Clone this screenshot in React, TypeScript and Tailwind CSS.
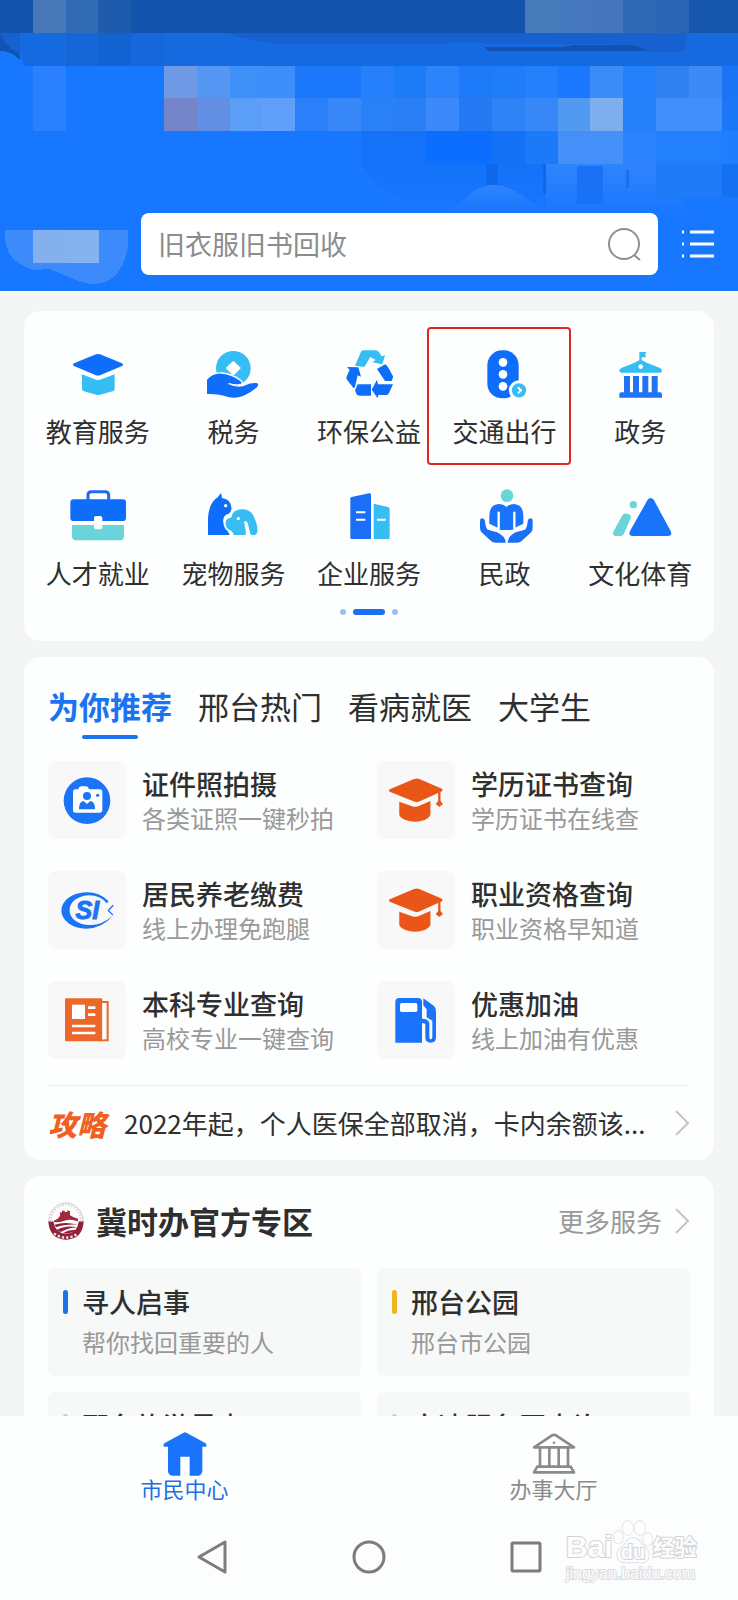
import React from "react"

const BLUE = "#0f6dfb"
const CYAN = "#36bdf3"
const TEAL = "#69d5da"

// [column, row, colour] of the tiles in the header artwork
const MOSAIC: [number, number, string][] = [
    [1, 0, "#4878b8"], [2, 0, "#316bb3"], [3, 0, "#1e5bad"],
    [16, 0, "#487bba"], [17, 0, "#4678bd"], [18, 0, "#4677bd"], [19, 0, "#2f68b4"], [20, 0, "#2c65b4"], [21, 0, "#1657ad"], [22, 0, "#1657ad"],
    [2, 1, "#1766d8"], [3, 1, "#1262d2"], [4, 1, "#1567db"],
    [1, 2, "#2a80ff"], [5, 2, "#6f99e5"], [6, 2, "#5596f3"], [7, 2, "#3f8ff8"], [8, 2, "#3d8dfa"], [9, 2, "#1c78fb"], [10, 2, "#1c78fb"],
    [11, 2, "#2680fb"], [12, 2, "#1c7bf6"], [13, 2, "#2c84fd"], [14, 2, "#1d7bf9"], [15, 2, "#207df9"], [16, 2, "#2580fc"],
    [17, 2, "#1a78fe"], [18, 2, "#3c8cf8"], [19, 2, "#2580fb"], [20, 2, "#2f80ee"], [21, 2, "#3b8af7"], [22, 2, "#1a74f5"],
    [1, 3, "#2a80ff"], [5, 3, "#7385c8"], [6, 3, "#628ee4"], [7, 3, "#5a9ef7"], [8, 3, "#609ffa"], [9, 3, "#2b80fa"], [10, 3, "#3888fa"],
    [11, 3, "#2a80f7"], [12, 3, "#2b7ff5"], [13, 3, "#3b89fa"], [14, 3, "#257af4"], [15, 3, "#2d82f6"], [16, 3, "#3787f8"],
    [17, 3, "#5299f1"], [18, 3, "#7eaeee"], [19, 3, "#2680fa"], [20, 3, "#3f8efa"], [21, 3, "#3f8efa"], [22, 3, "#1c76f8"],
    [11, 4, "#1472f9"], [12, 4, "#1472f9"], [13, 4, "#0c6eff"], [14, 4, "#0c6eff"], [15, 4, "#1371f5"], [16, 4, "#1c79f8"],
    [17, 4, "#4590f8"], [18, 4, "#4590f8"], [19, 4, "#2c82fb"], [20, 4, "#2380fd"], [21, 4, "#2380fd"], [22, 4, "#1f7efd"],
    [20, 5, "#1f7bf8"], [21, 5, "#1f7bf8"], [22, 5, "#1472f2"],
    [1, 7, "#84b1ee"], [2, 7, "#84b3f0"],
]

const HeaderArt = () => (
    <svg className="absolute inset-0 h-full w-full" viewBox="0 0 738 291" preserveAspectRatio="none" shapeRendering="crispEdges" aria-hidden="true">
        <defs>
            <linearGradient id="skyline" x1="0" y1="0" x2="0" y2="1">
                <stop offset="0" stopColor="#2f84fb" />
                <stop offset="1" stopColor="#1877ff" />
            </linearGradient>
            <linearGradient id="haze" x1="0" y1="0" x2="0" y2="1">
                <stop offset="0" stopColor="#1272f8" />
                <stop offset="1" stopColor="#1877ff" />
            </linearGradient>
        </defs>
        <rect width="738" height="291" fill="#1877ff" />
        <rect width="738" height="33" fill="#1153ad" />
        <path d="M18 33H738V66H24Q20 50 18 50Z" fill="#156ae0" />
        <path d="M0 33H20V60Q12 51 0 51Z" fill="#1153b4" />
        <path d="M20 33V54Q6 48 0 33Z" fill="#1562cc" />
        <path d="M228 33H686V50Q660 56 640 48L610 44H490Q470 40 440 44H280Q250 42 228 33Z" fill="#1660d0" />
        <path d="M484 47H560L574 45H632L650 51H488Z" fill="#1153b4" />
        <path d="M362 164H660V212H440Q380 200 362 164Z" fill="url(#haze)" />
        <path d="M546 164H660V180L694 214H546Z" fill="url(#skyline)" />
        <path d="M460 204Q486 172 520 194L546 212H440Z" fill="url(#skyline)" />
        <rect x="486" y="161" width="12" height="24" fill="#1068ec" />
        <rect x="543" y="164" width="3" height="30" fill="#1266e8" />
        <rect x="577" y="166" width="26" height="38" fill="#1971f6" />
        <rect x="626" y="170" width="3" height="18" fill="#1a6fee" />
        <path d="M5 230H128V246Q122 284 92 284Q84 284 50 269L34 270Q5 262 5 236Z" fill="#3d8afa" />
        {MOSAIC.map(([col, row, fill]) => (
            <rect
                key={`${col}-${row}`}
                x={col * 32.8}
                y={row === 7 ? 230 : row * 32.8}
                width="33"
                height="33"
                fill={fill}
            />
        ))}
    </svg>
)

const ServiceSvg = ({ children }: { children: React.ReactNode }) => (
    <svg className="h-15 w-15 overflow-visible" viewBox="0 0 180 180" aria-hidden="true">
        {children}
    </svg>
)

const SERVICES = [
    {
        name: "教育服务",
        art: (
            <>
                <path d="M84 28Q90 26 96 28L162 55Q168 59 162 63L98 90Q90 93 82 90L18 63Q12 59 18 55Z" fill={BLUE} />
                <path d="M42 88L84 104Q90 106 96 104L140 88V131Q140 137 134 139L96 149Q90 151 84 149L48 139Q42 137 42 131Z" fill={CYAN} />
            </>
        ),
    },
    {
        name: "税务",
        art: (
            <>
                <circle cx="91" cy="70" r="52" fill={CYAN} />
                <path d="M91 50L111 69L91 89L71 69Z" fill="#fff" stroke="#fff" strokeWidth="4" strokeLinejoin="round" />
                <path
                    d="M12 104Q30 84 56 86Q86 88 112 108Q120 116 110 120Q92 122 78 118Q98 128 120 124Q142 112 160 114Q169 116 163 125Q146 142 120 153Q96 162 75 156Q48 146 12 147Z"
                    fill={BLUE}
                    stroke="#fff"
                    strokeWidth="8"
                    paintOrder="stroke"
                />
                <path d="M78 116Q96 122 112 118" fill="none" stroke="#fff" strokeWidth="4" strokeLinecap="round" />
            </>
        ),
    },
    {
        name: "环保公益",
        art: (
            <>
                <path d="M48 62L66 20Q68 16 74 16H110Q116 16 120 21L128 34L138 31L130 58L100 52L110 45L94 36L76 66Z" fill={CYAN} />
                <path d="M24 66L58 67L66 95L56 91L48 126L44 130L24 104Q20 98 24 92L32 74Z" fill={BLUE} />
                <path d="M56 118H96V152H62Q54 152 52 146L48 136Z" fill={BLUE} />
                <path d="M98 134L114 104L117 118H162L150 144Q148 150 142 150H118L116 160Z" fill={BLUE} />
                <path d="M114 72L138 58Q144 60 148 68L162 94Q163 100 158 108H138Z" fill={BLUE} />
            </>
        ),
    },
    {
        name: "交通出行",
        marked: true,
        art: (
            <>
                <rect x="37" y="16" width="94" height="144" rx="44" fill={BLUE} />
                <circle cx="84" cy="52" r="13" fill="#fff" />
                <circle cx="84" cy="88" r="13" fill="#fff" />
                <circle cx="84" cy="124" r="13" fill="#fff" />
                <circle cx="132" cy="136" r="26" fill={CYAN} stroke="#fff" strokeWidth="9" />
                <path d="M129 127L138 136L129 145" fill="none" stroke="#fff" strokeWidth="6" />
            </>
        ),
    },
    {
        name: "政务",
        art: (
            <>
                <path d="M88 21H109L105 29L109 37H95V46Q102 48 110 53L150 69Q156 72 156 77Q156 83 150 83H34Q28 83 28 77Q28 72 34 69L74 53Q82 48 88 46Z" fill={CYAN} />
                <circle cx="92" cy="65" r="7" fill="#fff" />
                <path d="M42 93H60V142H69V93H87V142H97V93H115V142H125V93H143V142H150Q156 142 156 148V158H28V148Q28 142 34 142H42Z" fill="#2272f4" />
            </>
        ),
    },
    {
        name: "人才就业",
        art: (
            <>
                <path d="M60 38V24Q60 14 70 14H112Q122 14 122 24V38" fill="none" stroke="#1d6df0" strokeWidth="9" />
                <rect x="7" y="37" width="167" height="65" rx="10" fill={BLUE} />
                <path d="M12 114H168V148Q168 160 156 160H24Q12 160 12 148Z" fill={TEAL} />
                <rect x="78" y="87" width="25" height="40" rx="6" fill="#fff" />
            </>
        ),
    },
    {
        name: "宠物服务",
        art: (
            <>
                <path d="M15 144V94Q18 46 44 31L54 18L57 33Q74 36 80 46Q92 68 78 80Q58 84 61 106Q62 124 74 132L80 144Z" fill={BLUE} />
                <circle cx="68" cy="56" r="5" fill="#fff" />
                <path d="M68 104Q70 94 84 92Q90 68 114 67Q140 66 150 84Q166 116 163 136Q160 146 148 144Q138 142 136 132L130 106Q124 104 125 116Q130 134 128 144H92Q90 132 78 128Q66 122 68 104Z" fill={CYAN} />
                <circle cx="106" cy="95" r="5" fill="#fff" />
                <path d="M124 108Q130 102 132 112L140 144" fill="none" stroke="#fff" strokeWidth="6" />
            </>
        ),
    },
    {
        name: "企业服务",
        art: (
            <>
                <path d="M34 34Q34 31 38 30L90 19Q96 18 96 23V156H38Q34 156 34 152Z" fill="#1b6ff6" />
                <path d="M104 50L147 60Q152 61 152 66V152Q152 156 148 156H104Z" fill={CYAN} />
                <path d="M51 76H79M51 98H79M114 98H140" stroke="#fff" strokeWidth="6" />
            </>
        ),
    },
    {
        name: "民政",
        art: (
            <>
                <circle cx="96" cy="26" r="19" fill={TEAL} />
                <path d="M43 110V86Q43 54 70 51Q86 51 94 60Q102 51 118 51Q145 54 145 86V110L120 122Q116 129 108 129H80Q72 129 68 122Z" fill="#1a74fb" />
                <path d="M71 74V126M118 74V126" stroke="#fff" strokeWidth="7" />
                <path d="M20 94Q29 94 30 104Q32 122 38 128L66 136Q92 148 92 167H62Q50 166 44 158L22 138Q15 132 15 124V102Q15 94 20 94Z" fill="#1a6ff5" />
                <path d="M168 94Q159 94 158 104Q156 122 150 128L122 136Q98 148 98 167H126Q138 166 144 158L166 138Q173 132 173 124V102Q173 94 168 94Z" fill="#1a6ff5" />
            </>
        ),
    },
    {
        name: "文化体育",
        art: (
            <>
                <path d="M112 40Q122 26 132 40L182 132Q188 147 174 147H68Q54 147 60 132Z" fill="#1874fb" />
                <circle cx="70" cy="53" r="11" fill={TEAL} />
                <path d="M36 86Q42 77 52 80Q66 84 62 94L44 136Q40 147 32 147H18Q6 146 10 134Z" fill={TEAL} />
            </>
        ),
    },
]

const OrangeCap = () => (
    <svg className="h-11 w-14" viewBox="0 0 168 134" aria-hidden="true">
        <path d="M78 3Q86 0 94 3L163 33Q168 36 163 40L96 71Q86 76 76 71L4 42Q-1 38 4 34Z" fill="#ea5518" />
        <path d="M33 72L72 86Q84 90 96 84L128 70V112Q126 120 112 127Q82 140 50 127Q34 120 33 112Z" fill="#ea5518" />
        <path d="M155 38V72" stroke="#ea5518" strokeWidth="7" />
        <path d="M155 66L166 79L155 88L144 79Z" fill="#ea5518" />
    </svg>
)

const CameraIcon = () => (
    <svg className="h-12 w-12" viewBox="0 0 144 144" aria-hidden="true">
        <circle cx="72" cy="74" r="70" fill="#1a74f5" />
        <path d="M38 40H46Q48 31 56 31H68Q76 31 78 40H110Q118 40 118 48V102Q118 110 110 110H38Q30 110 30 102V48Q30 40 38 40Z" fill="#fff" />
        <circle cx="72" cy="60" r="12" fill="#1a74f5" />
        <path d="M48 100Q48 76 62 75L72 84L82 75Q96 76 96 100Z" fill="#1a74f5" />
        <circle cx="104" cy="58" r="5" fill="#1a74f5" />
    </svg>
)

const SocialInsuranceIcon = () => (
    <svg className="h-[37px] w-[53px]" viewBox="0 0 160 112" aria-hidden="true">
        <path d="M144 28Q116 0 76 1A76 54 0 0 0 1 56A76 54 0 0 0 76 111Q126 110 156 72Q122 102 86 100A60 43 0 0 1 26 56A60 43 0 0 1 86 10Q118 10 138 34Z" fill="#1a74f5" />
        <path d="M158 40L143 56L157 70" fill="none" stroke="#1a74f5" strokeWidth="4" />
        <text x="44" y="82" className="font-['Liberation_Sans'] text-[76px] font-bold italic" fill="#1a74f5" stroke="#1a74f5" strokeWidth="3">SI</text>
    </svg>
)

const NewspaperIcon = () => (
    <svg className="h-11 w-11" viewBox="0 0 132 132" aria-hidden="true">
        <rect x="0" y="1" width="112" height="129" rx="4" fill="#ec672a" />
        <path d="M108 12H128V127H104" fill="none" stroke="#ec672a" strokeWidth="6" />
        <path d="M115 15V124" stroke="#fff" strokeWidth="6" />
        <rect x="21" y="20" width="39" height="43" fill="#fff" />
        <path d="M69 29H91M69 50H91M21 84H91M21 105H91" stroke="#fff" strokeWidth="8" />
    </svg>
)

const FuelIcon = () => (
    <svg className="h-[45px] w-[42px]" viewBox="0 0 124 135" aria-hidden="true">
        <path d="M0 134V12Q0 0 12 0H68Q80 0 80 12V134Z" fill="#1a74fb" />
        <rect x="14" y="15" width="52" height="27" rx="5" fill="#fff" />
        <path d="M84 1L116 24Q122 29 122 40V120Q121 134 106 134Q90 134 90 118V80Q90 75 80 75V62Q101 62 102 76V116Q102 124 106 124Q111 124 111 116V68L94 58V34L84 22Z" fill="#1a74fb" />
    </svg>
)

const TABS = ["为你推荐", "邢台热门", "看病就医", "大学生"]

const RECOMMENDED = [
    { title: "证件照拍摄", sub: "各类证照一键秒拍", icon: <CameraIcon /> },
    { title: "学历证书查询", sub: "学历证书在线查", icon: <OrangeCap /> },
    { title: "居民养老缴费", sub: "线上办理免跑腿", icon: <SocialInsuranceIcon /> },
    { title: "职业资格查询", sub: "职业资格早知道", icon: <OrangeCap /> },
    { title: "本科专业查询", sub: "高校专业一键查询", icon: <NewspaperIcon /> },
    { title: "优惠加油", sub: "线上加油有优惠", icon: <FuelIcon /> },
]

const OFFICIAL = [
    { title: "寻人启事", sub: "帮你找回重要的人", bar: "bg-[#1a73ea]" },
    { title: "邢台公园", sub: "邢台市公园", bar: "bg-[#efb51c]" },
    { title: "邢台旅游景点", bar: "bg-[#c9cccf]" },
    { title: "高速服务区查询", bar: "bg-[#c9cccf]" },
]

const Chevron = () => (
    <svg className="h-7 w-4 shrink-0" viewBox="0 0 16 28" fill="none" stroke="#c4c4c4" strokeWidth="2" aria-hidden="true">
        <path d="M2 2L14 14L2 26" />
    </svg>
)

const Emblem = () => (
    <svg className="h-[38px] w-9 shrink-0" viewBox="0 0 108 114" aria-hidden="true">
        <ellipse cx="54" cy="57" rx="51" ry="54" fill="#fff" stroke="#b9a3a8" strokeWidth="2" />
        <ellipse cx="54" cy="57" rx="45" ry="48" fill="none" stroke="#d3c0c4" strokeWidth="5" strokeDasharray="4 5" />
        <path d="M1 58Q8 60 16 58Q22 94 54 96Q88 94 92 58Q100 60 107 58Q104 112 54 113Q4 112 1 58Z" fill="#94213a" />
        <path d="M18 94Q54 120 90 94" fill="none" stroke="#f3e4e7" strokeWidth="7" strokeDasharray="7 6" />
        <path d="M18 56Q30 52 36 42L36 30L42 32V26H50V30H58V25L66 28V40Q78 48 90 50V58Q64 48 44 58Q30 62 18 60Z" fill="#a3283c" />
        <path d="M20 68Q50 58 90 68Q52 66 24 76ZM26 84Q52 68 88 76Q60 78 38 90ZM44 94Q62 82 84 84Q76 92 58 95Z" fill="#94213a" />
    </svg>
)

const HomeIcon = () => (
    <svg className="h-11 w-11" viewBox="0 0 132 132" aria-hidden="true">
        <path d="M62 2Q66 0 70 2L128 34Q131 37 130 44H118V118Q116 130 106 131H80V74H52V131H28Q16 130 15 118V44H2Q0 37 4 34Z" fill="#1a74fb" />
    </svg>
)

const HallIcon = () => (
    <svg className="h-11 w-11" viewBox="0 0 132 132" fill="none" stroke="#8b8b8b" strokeWidth="8" strokeLinejoin="round" aria-hidden="true">
        <path d="M6 46L60 10Q66 7 72 10L126 46ZM24 48V104M52 48V104M80 48V104M108 48V104M16 104H116L126 121H6Z" />
        <circle cx="66" cy="32" r="3" fill="#8b8b8b" strokeWidth="2" />
    </svg>
)

const Watermark = () => (
    <div className="pointer-events-none absolute top-0 right-9 flex w-[136px] flex-col font-['Liberation_Sans','Noto_Sans_CJK_SC',sans-serif] font-bold text-[#fdfdfe] [paint-order:stroke_fill]">
        <div className="flex items-end [-webkit-text-stroke:2px_#d4d4d6]">
            <span className="text-[30px] leading-[34px]">Bai</span>
            <span className="relative h-11 w-10 shrink-0">
                <svg className="absolute inset-0 h-full w-full" viewBox="0 0 120 132" fill="#fdfdfe" stroke="#d8d8da" strokeWidth="4" aria-hidden="true">
                    <ellipse cx="16" cy="52" rx="14" ry="19" />
                    <ellipse cx="44" cy="24" rx="16" ry="21" />
                    <ellipse cx="80" cy="24" rx="16" ry="21" />
                    <ellipse cx="104" cy="58" rx="14" ry="19" />
                    <path d="M60 54Q76 54 86 72Q108 88 108 106Q106 128 84 128Q60 124 40 128Q14 128 12 106Q12 90 34 74Q44 54 60 54Z" />
                </svg>
                <span className="absolute bottom-0 left-2 text-xl leading-6">du</span>
            </span>
            <span className="text-[22px] leading-8">经验</span>
        </div>
        <span className="text-base leading-5 font-normal [-webkit-text-stroke:2px_#dcdcde]">jingyan.baidu.com</span>
    </div>
)

const App = () => {
    return (
        <div className="flex h-screen flex-col overflow-hidden bg-[#f4f6f6] font-['Noto_Sans_CJK_SC',sans-serif] text-[#2f2f2f]">
            <header className="relative shrink-0 border-b-2 border-white pt-[213px] pr-6 pb-4 pl-[141px]">
                <HeaderArt />
                <div className="relative flex items-center gap-6">
                    <form className="flex h-[62px] min-w-0 flex-1 items-center rounded-lg bg-white pr-4 pl-[17px]" role="search">
                        <input
                            type="search"
                            aria-label="搜索"
                            placeholder="旧衣服旧书回收"
                            className="min-w-0 flex-1 bg-transparent text-[27px] leading-9 outline-none placeholder:text-[#8c8c8c]"
                        />
                        <button type="button" aria-label="搜索">
                            <svg className="h-9 w-9" viewBox="0 0 36 36" fill="none" stroke="#8f8f8f" strokeWidth="2" aria-hidden="true">
                                <circle cx="18" cy="18" r="15" />
                                <path d="M28 29L34 34" />
                            </svg>
                        </button>
                    </form>
                    <button type="button" aria-label="全部服务">
                        <svg className="h-8 w-8" viewBox="0 0 32 32" stroke="#fff" strokeWidth="3" aria-hidden="true">
                            <path d="M0 4H2M8 4H32M0 16H2M8 16H32M0 28H2M8 28H32" />
                        </svg>
                    </button>
                </div>
            </header>

            <main className="flex min-h-0 flex-1 flex-col gap-4 overflow-hidden px-6 pt-[18px]">
                <section className="shrink-0 rounded-2xl bg-[#fdfefe] px-1.5 pt-[34px] pb-[26px]">
                    <div className="grid grid-cols-5 gap-y-[38px]">
                        {SERVICES.map((service) => (
                            <button key={service.name} type="button" className="relative flex flex-col items-center gap-2">
                                <ServiceSvg>{service.art}</ServiceSvg>
                                <span className="text-[26px] leading-9 whitespace-nowrap">{service.name}</span>
                                {service.marked && (
                                    <span className="absolute -top-[18px] -bottom-4 -left-2.5 w-36 rounded-sm border-2 border-[#e0261f]" />
                                )}
                            </button>
                        ))}
                    </div>
                    <div className="mt-[18px] flex items-center justify-center gap-[7px]">
                        <span className="h-1.5 w-1.5 rounded-full bg-[#9dbdf3]" />
                        <span className="h-1.5 w-8 rounded-sm bg-[#1a70ef]" />
                        <span className="h-1.5 w-1.5 rounded-full bg-[#9dbdf3]" />
                    </div>
                </section>

                <section className="shrink-0 rounded-2xl bg-[#fdfefe] px-6 pt-7">
                    <div className="flex items-start gap-[26px]" role="tablist">
                        {TABS.map((tab, index) => (
                            <button key={tab} type="button" role="tab" aria-selected={index === 0} className="flex flex-col items-center gap-2">
                                <span className={index === 0 ? "text-[31px] leading-[42px] font-bold text-[#1a73f2]" : "text-[31px] leading-[42px]"}>{tab}</span>
                                {index === 0 && <span className="h-1 w-14 rounded-full bg-[#1a73f2]" />}
                            </button>
                        ))}
                    </div>
                    <div className="mt-[22px] grid grid-cols-2 gap-x-4 gap-y-8">
                        {RECOMMENDED.map((item) => (
                            <a key={item.title} href="#" className="flex items-center gap-4">
                                <span className="flex h-[78px] w-[78px] shrink-0 items-center justify-center rounded-lg bg-[#f8f8f8]">
                                    {item.icon}
                                </span>
                                <span className="flex flex-col whitespace-nowrap">
                                    <span className="text-[27px] leading-9 font-medium">{item.title}</span>
                                    <span className="text-2xl leading-8 text-[#999]">{item.sub}</span>
                                </span>
                            </a>
                        ))}
                    </div>
                    <a href="#" className="mt-[26px] flex h-[75px] items-center gap-[18px] border-t border-[#eeeeee]">
                        <span className="shrink-0 text-[29px] leading-9 font-black text-[#f0601f] italic">攻略</span>
                        <span className="min-w-0 flex-1 text-[26px] leading-9 whitespace-nowrap">
                            2022年起，个人医保全部取消，卡内余额该...
                        </span>
                        <Chevron />
                    </a>
                </section>

                <section className="shrink-0 rounded-2xl bg-[#fdfefe] px-6 pt-6">
                    <div className="flex h-[42px] items-center">
                        <Emblem />
                        <h2 className="flex-1 pl-3 text-[31px] leading-10 font-bold">冀时办官方专区</h2>
                        <a href="#" className="flex items-center gap-3 text-[26px] leading-9 text-[#999]">
                            更多服务
                            <Chevron />
                        </a>
                    </div>
                    <div className="mt-[26px] grid grid-cols-2 gap-4">
                        {OFFICIAL.map((item) => (
                            <a key={item.title} href="#" className="flex flex-col gap-1.5 rounded-md bg-[#f7f8f8] px-[15px] pt-4 pb-[18px]">
                                <span className="flex items-center gap-[14px]">
                                    <span className={`h-6 w-[5px] rounded-full ${item.bar}`} />
                                    <span className="text-[27px] leading-9 font-medium">{item.title}</span>
                                </span>
                                {item.sub && <span className="pl-[19px] text-2xl leading-8 text-[#999]">{item.sub}</span>}
                            </a>
                        ))}
                    </div>
                </section>
            </main>

            <nav className="grid shrink-0 grid-cols-2 bg-[#fdfefe] pt-4 pb-5">
                <a href="#" className="flex flex-col items-center text-[22px] leading-6 text-[#1f6fe0]">
                    <HomeIcon />
                    市民中心
                </a>
                <a href="#" className="flex flex-col items-center text-[22px] leading-6 text-[#8b8b8b]">
                    <HallIcon />
                    办事大厅
                </a>
            </nav>

            <div className="relative flex h-20 shrink-0 items-center justify-center gap-[121px] bg-[#fcfdfd] pb-1.5">
                <button type="button" aria-label="返回">
                    <svg className="h-9 w-9" viewBox="0 0 36 36" fill="none" stroke="#7d7d7d" strokeWidth="3" strokeLinejoin="round" aria-hidden="true">
                        <path d="M5 18L31 3V33Z" />
                    </svg>
                </button>
                <button type="button" aria-label="主屏幕">
                    <svg className="h-9 w-9" viewBox="0 0 36 36" fill="none" stroke="#7d7d7d" strokeWidth="3" aria-hidden="true">
                        <circle cx="18" cy="18" r="15" />
                    </svg>
                </button>
                <button type="button" aria-label="最近任务">
                    <svg className="h-9 w-9" viewBox="0 0 36 36" fill="none" stroke="#7d7d7d" strokeWidth="3" aria-hidden="true">
                        <rect x="4" y="4" width="28" height="28" rx="1" />
                    </svg>
                </button>
                <Watermark />
            </div>
        </div>
    )
}

export default App
